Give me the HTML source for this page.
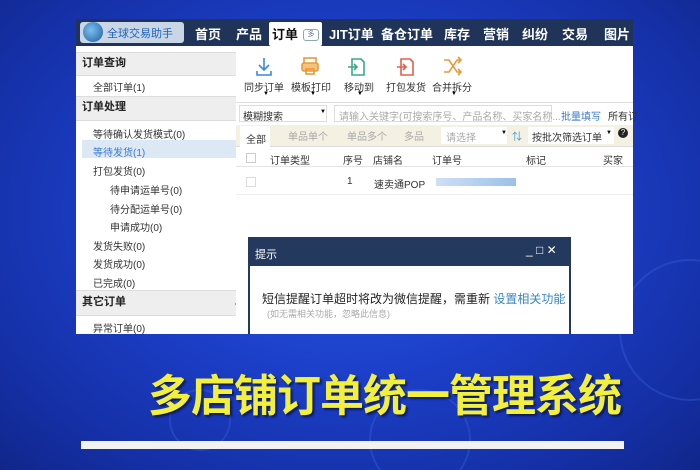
<!DOCTYPE html>
<html><head><meta charset="utf-8"><style>
*{margin:0;padding:0;box-sizing:border-box}
body{width:700px;height:470px;overflow:hidden;position:relative;font-family:"Liberation Sans","Noto Sans CJK SC",sans-serif;
background:radial-gradient(ellipse at 50% 45%,#2a5ae8 0%,#1c3fc8 45%,#1530a6 80%,#10268a 100%)}
.a{position:absolute;white-space:nowrap}
.nav{left:76px;top:19px;width:557px;height:27px;background:#1f3458}
.nav span{position:absolute;top:5px;color:#fff;font-size:13px;font-weight:bold}
.side{left:76px;top:46px;width:160px;height:288px;background:#fff}
.sh{position:absolute;left:0;width:160px;background:#eeeeee;font-size:11px;font-weight:bold;color:#222;padding-left:6px;border-top:1px solid #ddd;border-bottom:1px solid #ddd}
.si{position:absolute;font-size:10px;color:#333}
.main{left:236px;top:46px;width:397px;height:288px;background:#fff}
.t{font-size:10px;color:#333}
.g{color:#aaa}
</style></head><body>
<svg class="a" style="left:0;top:0" width="700" height="470">
<g fill="none" stroke="#3f6ce8" stroke-width="2" opacity=".3">
<circle cx="690" cy="330" r="70"/><circle cx="420" cy="440" r="50"/><circle cx="200" cy="420" r="30"/>
</g></svg>
<div class="a nav">
 <div style="position:absolute;left:4px;top:3px;width:104px;height:21px;background:#c9d6e6;border-radius:3px"></div>
 <div style="position:absolute;left:7px;top:3px;width:20px;height:20px;border-radius:50%;background:radial-gradient(circle at 40% 40%,#7bc0f0,#1d5c9c)"></div>
 <span style="left:31px;top:6px;font-size:11px;color:#1d63b8;font-weight:normal">全球交易助手</span>
 <span style="left:119px">首页</span><span style="left:160px">产品</span>
 <div style="position:absolute;left:193px;top:3px;width:53px;height:24px;background:#fff;border-radius:2px"></div>
 <span style="left:196px;color:#111">订单</span>
 <div style="position:absolute;left:227px;top:10px;width:16px;height:12px;border:1px solid #8aa;border-radius:3px;font-size:7px;color:#679;text-align:center;line-height:10px">多</div>
 <span style="left:253px">JIT订单</span><span style="left:305px">备仓订单</span><span style="left:368px">库存</span><span style="left:407px">营销</span><span style="left:446px">纠纷</span><span style="left:486px">交易</span><span style="left:528px">图片</span>
</div>
<div class="a side">
 <div class="sh" style="top:6px;height:24px;line-height:20px">订单查询</div>
 <div class="si" style="left:17px;top:33px">全部订单(1)</div>
 <div class="sh" style="top:50px;height:25px;line-height:21px">订单处理</div>
 <div class="si" style="left:17px;top:80px">等待确认发货模式(0)</div>
 <div style="position:absolute;left:6px;top:94px;width:154px;height:18px;background:#dde8f5"></div>
 <div class="si" style="left:17px;top:98px;color:#3a7bd0">等待发货(1)</div>
 <div class="si" style="left:17px;top:117px">打包发货(0)</div>
 <div class="si" style="left:34px;top:136px">待申请运单号(0)</div>
 <div class="si" style="left:34px;top:155px">待分配运单号(0)</div>
 <div class="si" style="left:34px;top:173px">申请成功(0)</div>
 <div class="si" style="left:17px;top:192px">发货失败(0)</div>
 <div class="si" style="left:17px;top:210px">发货成功(0)</div>
 <div class="si" style="left:17px;top:229px">已完成(0)</div>
 <div class="sh" style="top:244px;height:26px;line-height:22px">其它订单</div>
 <div class="si" style="left:17px;top:274px">异常订单(0)</div>
</div>
<div class="a" style="left:236px;top:46px;width:4px;height:288px;background:#f3efe0"></div>
<div class="a" style="left:235px;top:301px;width:0;height:0;border-top:3px solid transparent;border-bottom:3px solid transparent;border-right:4px solid #222"></div>
<div class="a main">
 <svg style="position:absolute;left:0;top:0" width="397" height="60">
  <g fill="none" stroke-width="1.6">
  <path d="M28 12v12M23 19l5 5 5-5M21 25v4h14v-4" stroke="#3a8ad8"/>
  <rect x="68" y="12" width="12" height="6" stroke="#e89a3a"/><rect x="66" y="17" width="16" height="8" rx="2" stroke="#e89a3a" fill="#f6c27a"/><rect x="70" y="23" width="8" height="5" stroke="#e89a3a"/>
  <path d="M116 13h9l3 3v13h-12zM112 21h9M118 18l3 3-3 3" stroke="#3aa88a"/>
  <path d="M165 13h9l3 3v13h-12zM161 21h9M167 18l3 3-3 3" stroke="#e0604a"/>
  <path d="M208 14l5 0 8 12 4 0M208 26h5l8-12h4M222 11l3 3-3 3M222 23l3 3-3 3" stroke="#e89a3a"/>
  </g></svg>
 <div class="a t" style="left:8px;top:33px">同步订单</div>
 <div class="a t" style="left:55px;top:33px">模板打印</div>
 <div class="a t" style="left:108px;top:33px">移动到</div>
 <div class="a t" style="left:150px;top:33px">打包发货</div>
 <div class="a t" style="left:196px;top:33px">合并拆分</div>
 <div class="a" style="left:27px;top:45px;font-size:6px">▼</div><div class="a" style="left:74px;top:45px;font-size:6px">▼</div><div class="a" style="left:121px;top:45px;font-size:6px">▼</div><div class="a" style="left:215px;top:45px;font-size:6px">▼</div>
 <div style="position:absolute;left:0;top:56px;width:397px;height:1px;background:#ddd"></div>
 <div style="position:absolute;left:3px;top:59px;width:88px;height:17px;border:1px solid #ddd"></div>
 <div class="a t" style="left:7px;top:62px">模糊搜索</div><div class="a" style="left:84px;top:63px;font-size:6px">▼</div>
 <div style="position:absolute;left:98px;top:59px;width:218px;height:17px;border:1px solid #ddd"></div>
 <div class="a t g" style="left:103px;top:62px">请输入关键字(可搜索序号、产品名称、买家名称...</div>
 <div class="a t" style="left:325px;top:62px;color:#3a7bd0">批量填写</div>
 <div class="a t" style="left:372px;top:62px">所有订</div>
 <div style="position:absolute;left:0;top:79px;width:397px;height:22px;background:#f4f0e2;border-bottom:1px solid #ddd"></div>
 <div style="position:absolute;left:4px;top:80px;width:30px;height:22px;background:#fff"></div>
 <div class="a t" style="left:10px;top:85px">全部</div>
 <div class="a t g" style="left:52px;top:82px">单品单个</div>
 <div class="a t g" style="left:111px;top:82px">单品多个</div>
 <div class="a t g" style="left:168px;top:82px">多品</div>
 <div style="position:absolute;left:205px;top:81px;width:66px;height:17px;background:#fff"></div>
 <div class="a t g" style="left:210px;top:83px">请选择</div><div class="a" style="left:265px;top:84px;font-size:6px">▼</div>
 <div class="a t" style="left:276px;top:82px;color:#3a9ad8">⇅</div>
 <div style="position:absolute;left:292px;top:81px;width:86px;height:17px;background:#fff"></div>
 <div class="a t" style="left:296px;top:83px">按批次筛选订单</div><div class="a" style="left:370px;top:84px;font-size:6px">▼</div>
 <div class="a" style="left:382px;top:82px;width:10px;height:10px;border-radius:50%;background:#222;color:#fff;font-size:8px;text-align:center;line-height:10px">?</div>
 <div style="position:absolute;left:0;top:103px;width:397px;height:18px;border-bottom:1px solid #e4e4e4"></div>
 <div style="position:absolute;left:10px;top:107px;width:10px;height:10px;border:1px solid #ccc"></div>
 <div class="a t" style="left:34px;top:106px">订单类型</div>
 <div class="a t" style="left:107px;top:106px">序号</div><div class="a t" style="left:137px;top:106px">店铺名</div><div class="a t" style="left:196px;top:106px">订单号</div><div class="a t" style="left:290px;top:106px">标记</div><div class="a t" style="left:367px;top:106px">买家</div>
 <div style="position:absolute;left:10px;top:131px;width:10px;height:10px;border:1px solid #ddd"></div>
 <div class="a t" style="left:111px;top:130px">1</div><div class="a t" style="left:138px;top:130px">速卖通POP</div>
 <div style="position:absolute;left:200px;top:132px;width:80px;height:8px;background:linear-gradient(90deg,#cde0f5,#9cc0e8)"></div>
 <div style="position:absolute;left:0;top:148px;width:397px;height:1px;background:#eee"></div>
</div>
<div class="a" style="left:248px;top:237px;width:323px;height:97px;background:#fff;border:2px solid #233a5e;border-bottom:none">
 <div style="position:absolute;left:0;top:0;width:319px;height:27px;background:#233a5e"></div>
 <div class="a" style="left:5px;top:7px;color:#fff;font-size:11px">提示</div>
 <div class="a" style="left:276px;top:4px;color:#fff;font-size:12px">_ □ ✕</div>
 <div class="a" style="left:12px;top:51px;font-size:12px;color:#222">短信提醒订单超时将改为微信提醒，需重新 <span style="color:#3a86c8">设置相关功能</span></div>
 <div class="a" style="left:17px;top:68px;font-size:9px;color:#aaa">(如无需相关功能，忽略此信息)</div>
</div>
<div class="a" style="left:148px;top:366px;font-size:44px;font-weight:bold;color:#f2f03a;letter-spacing:-1px;text-shadow:2px 2px 2px rgba(0,0,40,.6);font-family:'Noto Sans CJK SC',sans-serif;line-height:52px">多店铺订单统一管理系统</div>
<div class="a" style="left:81px;top:441px;width:543px;height:8px;background:#f2f2f2"></div>
</body></html>
